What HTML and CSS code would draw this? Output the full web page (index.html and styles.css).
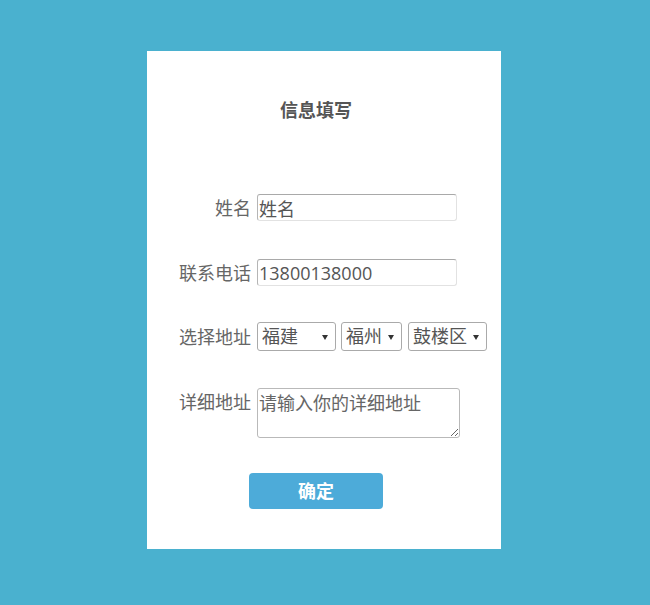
FILE: index.html
```html
<!DOCTYPE html>
<html lang="zh-CN">
<head>
<meta charset="utf-8">
<title>信息填写</title>
<link rel="stylesheet" href="styles.css">
</head>
<body>
<div class="card">
  <h1 class="title">信息填写</h1>
  <form class="form">
    <div class="row row-name">
      <label class="label">姓名</label>
      <input class="input" type="text" value="姓名">
    </div>
    <div class="row row-phone">
      <label class="label">联系电话</label>
      <input class="input" type="text" value="13800138000">
    </div>
    <div class="row row-select">
      <label class="label">选择地址</label>
      <div class="selects">
        <span class="sel sel-a"><select class="select"><option>福建</option></select><span class="arrow"></span></span>
        <span class="sel sel-b"><select class="select"><option>福州</option></select><span class="arrow"></span></span>
        <span class="sel sel-c"><select class="select"><option>鼓楼区</option></select><span class="arrow"></span></span>
      </div>
    </div>
    <div class="row row-area">
      <label class="label">详细地址</label>
      <textarea class="textarea" placeholder="请输入你的详细地址"></textarea>
    </div>
    <button class="btn" type="button">确定</button>
  </form>
</div>
</body>
</html>
```

FILE: styles.css
```css
html, body {
  margin: 0;
  padding: 0;
}
body {
  background: #4ab1cf;
  font-family: "Open Sans", "Noto Sans CJK SC", sans-serif;
  width: 650px;
  height: 605px;
  overflow: hidden;
}
.card {
  box-sizing: border-box;
  width: 354px;
  height: 498px;
  margin: 51px 0 0 147px;
  background: #fff;
  padding-top: 47px;
}
.title {
  margin: 0;
  width: 338px;
  text-align: center;
  font-size: 18px;
  line-height: 24px;
  font-weight: bold;
  color: #555;
}
.form {
  margin-top: 72px;
}
.row {
  display: flex;
  align-items: center;
}
.row-phone { margin-top: 38px; }
.row-select { margin-top: 36px; }
.row-area { margin-top: 37px; align-items: flex-start; }
.label {
  width: 104px;
  margin-right: 6px;
  text-align: right;
  font-size: 18px;
  line-height: 24px;
  color: #666;
  flex: none;
}
.row-area .label { margin-top: 2px; }
.input {
  box-sizing: border-box;
  width: 200px;
  height: 27px;
  margin: 0;
  padding: 0 1px;
  border: 1px solid #e2e2e2;
  border-top-color: #a9a9a9;
  border-left-color: #b5b5b5;
  border-radius: 3px;
  font-family: inherit;
  font-size: 18px;
  line-height: 25px;
  color: #555;
  outline: none;
  background: #fff;
}
.selects {
  display: flex;
  gap: 5px;
}
.sel {
  position: relative;
  display: block;
  height: 29px;
}
.sel-a { width: 79px; }
.sel-b { width: 61px; }
.sel-c { width: 79px; margin-left: 1px; }
.select {
  -webkit-appearance: none;
  appearance: none;
  box-sizing: border-box;
  width: 100%;
  height: 29px;
  margin: 0;
  padding: 0 0 0 4px;
  border: 1px solid #aaa;
  border-radius: 3px;
  background: #fff;
  font-family: inherit;
  font-size: 18px;
  line-height: 27px;
  color: #555;
  outline: none;
}
.arrow {
  position: absolute;
  right: 8px;
  top: 13px;
  width: 0;
  height: 0;
  border-left: 3px solid transparent;
  border-right: 3px solid transparent;
  border-top: 5px solid #333;
  pointer-events: none;
}
.textarea {
  box-sizing: border-box;
  width: 203px;
  height: 50px;
  margin: 0;
  padding: 2px 1px;
  border: 1px solid #b9b9b9;
  border-radius: 3px;
  font-family: inherit;
  font-size: 18px;
  line-height: 24px;
  color: #555;
  outline: none;
  resize: both;
}
.textarea::placeholder {
  color: #666;
  opacity: 1;
}
.btn {
  display: block;
  margin: 35px 0 0 102px;
  width: 134px;
  height: 36px;
  border: none;
  border-radius: 4px;
  background: #4dabd9;
  color: #fff;
  font-family: inherit;
  font-size: 18px;
  font-weight: bold;
  line-height: 36px;
  padding: 0;
}
```
